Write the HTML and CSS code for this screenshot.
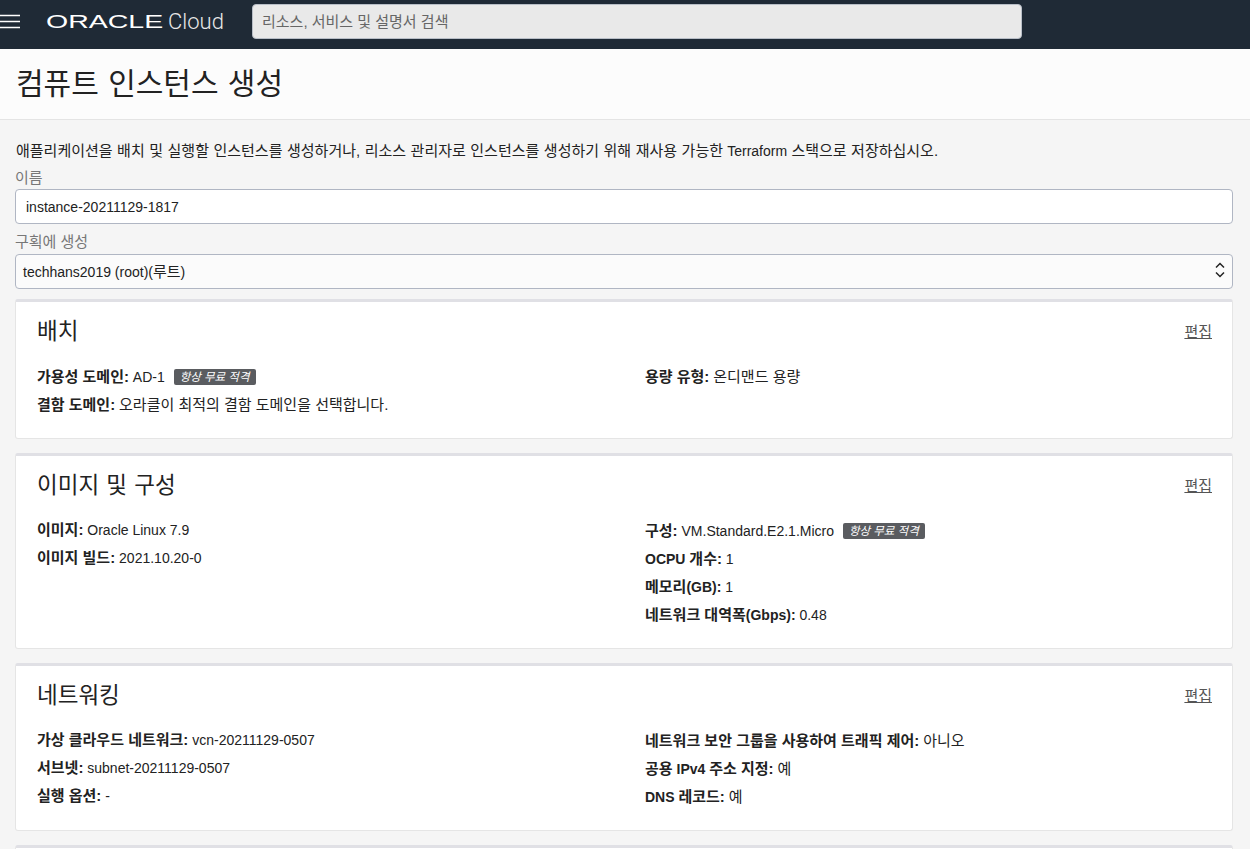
FILE: index.html
```html
<!DOCTYPE html>
<html lang="ko">
<head>
<meta charset="utf-8">
<title>컴퓨트 인스턴스 생성</title>
<link rel="stylesheet" href="styles.css">
</head>
<body>
<header class="topbar">
  <button class="menu-btn" aria-label="메뉴"><svg width="20" height="15" viewBox="0 0 20 15"><path d="M0 1.5H20M0 7.5H20M0 13.5H20" stroke="#fff" stroke-width="1.3" fill="none"/></svg></button>
  <div class="logo"><span class="logo-oracle">ORACLE</span><span class="logo-cloud">Cloud</span></div>
  <div class="search k">리소스, 서비스 및 설명서 검색</div>
</header>
<div class="titlebar"><h1>컴퓨트 인스턴스 생성</h1></div>
<main class="content">
  <p class="intro"><span class="k">애플리케이션을 배치 및 실행할 인스턴스를 생성하거나, 리소스 관리자로 인스턴스를 생성하기 위해 재사용 가능한</span> Terraform <span class="k">스택으로 저장하십시오.</span></p>
  <div class="field name-field">
    <label class="label k">이름</label>
    <div class="input">instance-20211129-1817</div>
  </div>
  <div class="field">
    <label class="label k">구획에 생성</label>
    <div class="input select"><span>techhans2019 (root)(<span class="k">루트</span>)</span>
      <svg class="chev" width="10" height="16" viewBox="0 0 10 16"><path d="M1 5.5L5 1.5L9 5.5M1 10.5L5 14.5L9 10.5" stroke="#222" stroke-width="1.5" fill="none"/></svg>
    </div>
  </div>

  <section class="card">
    <div class="card-head"><h2>배치</h2><a class="edit k">편집</a></div>
    <div class="grid">
      <div class="col">
        <div class="row"><b class="k">가용성 도메인:</b> AD-1 <span class="badge">항상 무료 적격</span></div>
        <div class="row"><b class="k">결함 도메인:</b> <span class="k">오라클이 최적의 결함 도메인을 선택합니다.</span></div>
      </div>
      <div class="col">
        <div class="row"><b class="k">용량 유형:</b> <span class="k">온디맨드 용량</span></div>
      </div>
    </div>
  </section>

  <section class="card">
    <div class="card-head"><h2>이미지 및 구성</h2><a class="edit k">편집</a></div>
    <div class="grid">
      <div class="col">
        <div class="row"><b class="k">이미지:</b> Oracle Linux 7.9</div>
        <div class="row"><b class="k">이미지 빌드:</b> 2021.10.20-0</div>
      </div>
      <div class="col">
        <div class="row"><b class="k">구성:</b> VM.Standard.E2.1.Micro <span class="badge">항상 무료 적격</span></div>
        <div class="row"><b>OCPU <span class="k">개수:</span></b> 1</div>
        <div class="row"><b><span class="k">메모리</span>(GB):</b> 1</div>
        <div class="row"><b><span class="k">네트워크 대역폭</span>(Gbps):</b> 0.48</div>
      </div>
    </div>
  </section>

  <section class="card">
    <div class="card-head"><h2>네트워킹</h2><a class="edit k">편집</a></div>
    <div class="grid">
      <div class="col">
        <div class="row"><b class="k">가상 클라우드 네트워크:</b> vcn-20211129-0507</div>
        <div class="row"><b class="k">서브넷:</b> subnet-20211129-0507</div>
        <div class="row"><b class="k">실행 옵션:</b> -</div>
      </div>
      <div class="col">
        <div class="row"><b class="k">네트워크 보안 그룹을 사용하여 트래픽 제어:</b> <span class="k">아니오</span></div>
        <div class="row"><b><span class="k">공용</span> IPv4 <span class="k">주소 지정:</span></b> <span class="k">예</span></div>
        <div class="row"><b>DNS <span class="k">레코드:</span></b> <span class="k">예</span></div>
      </div>
    </div>
  </section>

  <section class="card"></section>
</main>
</body>
</html>
```
FILE: styles.css
```css
html, body {
  margin: 0;
  height: 849px;
  overflow: hidden;
}
body {
  background: #f5f5f5;
  color: #222;
  font-family: "Liberation Sans", "Noto Sans CJK KR", sans-serif;
  font-size: 14px;
  line-height: 20px;
}
.k {
  font-size: 15px;
}
.topbar {
  height: 49px;
  box-sizing: border-box;
  padding-bottom: 6px;
  background: #1f2a36;
  display: flex;
  align-items: center;
}
.menu-btn {
  width: 46px;
  height: 43px;
  padding: 0;
  border: 0;
  background: none;
  display: flex;
  align-items: center;
}
.logo {
  width: 206px;
  display: flex;
  align-items: center;
  color: #fff;
}
.logo-oracle {
  display: inline-block;
  width: 122px;
  font-size: 19px;
  transform: scaleX(1.5);
  transform-origin: left center;
}
.logo-cloud {
  font-family: Roboto, "Liberation Sans", sans-serif;
  font-size: 22px;
  font-weight: 300;
  color: #e8e8e8;
}
.search {
  width: 759px;
  height: 33px;
  padding-left: 9px;
  background: #e9e9e9;
  border: 1px solid #b8bec7;
  border-radius: 4px;
  color: #666;
  line-height: 33px;
}
.titlebar {
  height: 70px;
  background: #fcfcfc;
  border-bottom: 1px solid #e4e4e4;
  padding-left: 16px;
  display: flex;
  align-items: center;
}
h1 {
  margin: 0;
  font-size: 30px;
  font-weight: 400;
  word-spacing: 1px;
  color: #222;
  line-height: 36px;
}
.content {
  padding: 21px 17px 0 15px;
}
.intro {
  margin: 0;
  padding-left: 1px;
  line-height: 20px;
  word-spacing: 0.35px;
  color: #222;
}
.label {
  display: block;
  color: #777;
  line-height: 20px;
  margin-top: 8px;
  margin-bottom: 2px;
}
.name-field .label {
  margin-top: 7px;
  margin-bottom: 1px;
}
.input {
  height: 35px;
  box-sizing: border-box;
  background: #fff;
  border: 1px solid #b0b6c3;
  border-radius: 4px;
  padding: 0 10px;
  line-height: 35px;
  color: #222;
}
.select {
  background: #fbfbfb;
  padding: 1px 7px 0;
  display: flex;
  align-items: center;
  justify-content: space-between;
}
.chev {
  margin: 0 0 4px;
}
.card {
  background: #fff;
  border: 1px solid #e5e5e5;
  border-top: 3px solid #e0e0e5;
  border-radius: 3px;
  padding: 15px 20px 19px 21px;
  margin-bottom: 14px;
}
.field + .card {
  margin-top: 10px;
}
.card-head {
  display: flex;
  justify-content: space-between;
  align-items: center;
  height: 30px;
}
h2 {
  margin: 0;
  font-size: 22.5px;
  font-weight: 400;
  word-spacing: 1px;
  color: #222;
}
.edit {
  color: #555;
  text-decoration: underline;
}
.grid {
  display: grid;
  grid-template-columns: 1fr 1fr;
  column-gap: 41px;
  margin-top: 15px;
}
.col + .col,
.field + .card .col {
  padding-top: 1px;
}
.row {
  height: 28px;
  line-height: 28px;
  white-space: nowrap;
}
.row b {
  font-weight: 700;
}
.badge {
  display: inline-block;
  margin-left: 5px;
  padding: 0 6px;
  height: 16px;
  line-height: 16px;
  background: #5a5c60;
  color: #fff;
  border-radius: 2px;
  font-size: 11.5px;
  font-style: italic;
  vertical-align: 1px;
}
```
